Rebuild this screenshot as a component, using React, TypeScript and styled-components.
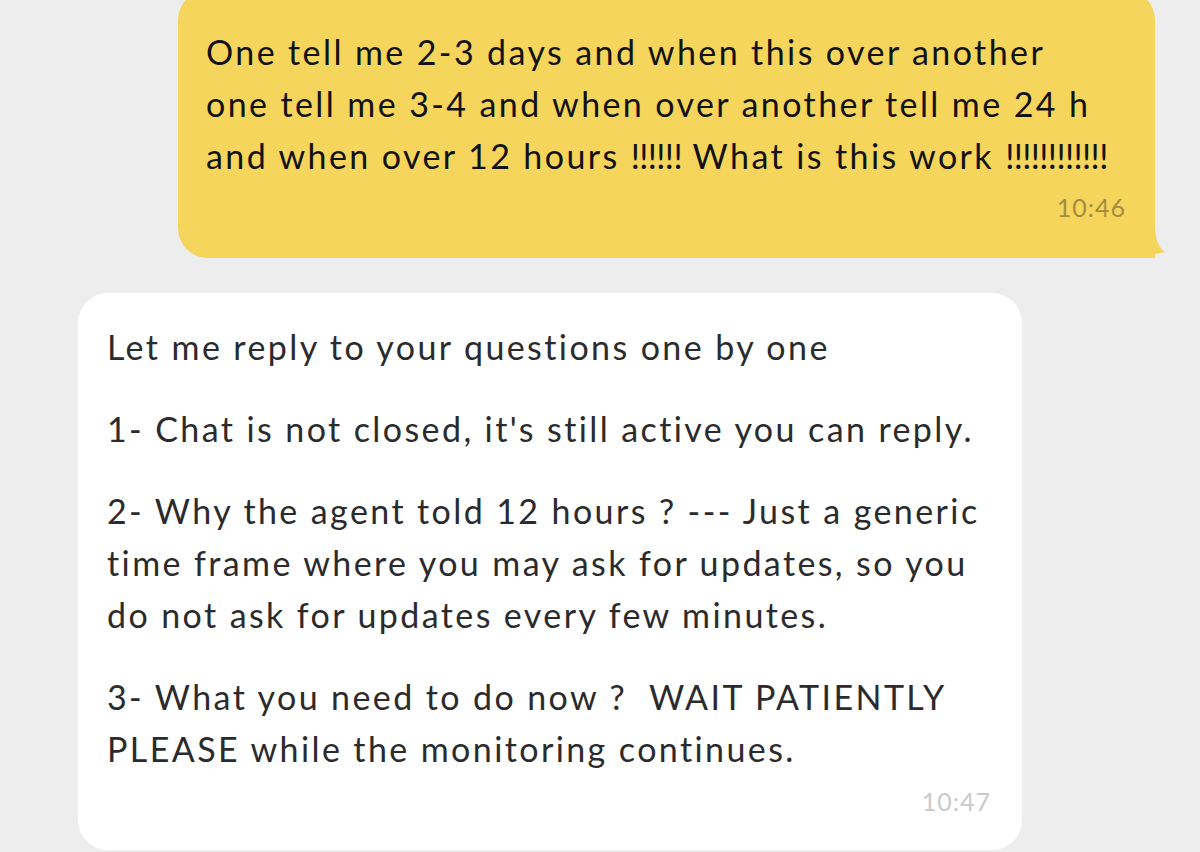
import React from "react";
import styled, { createGlobalStyle } from "styled-components";

const Global = createGlobalStyle`
  html, body { margin: 0; padding: 0; background: #ededed; }
  body { font-family: Lato, "Liberation Sans", sans-serif; }
`;

const Page = styled.div`
  width: 1200px;
  height: 852px;
  overflow: hidden;
  background: #ededed;
  display: flex;
  flex-direction: column;
`;

const OutBubble = styled.div`
  position: relative;
  margin-top: -10px;
  margin-left: 178px;
  width: 977px;
  box-sizing: border-box;
  background: #f5d55b;
  border-radius: 30px 30px 0 30px;
  padding: 36px 29px 36px 28px;
  color: #121212;
`;

const InBubble = styled.div`
  margin-top: 35px;
  margin-left: 78px;
  width: 944px;
  height: 557px;
  box-sizing: border-box;
  background: #ffffff;
  border-radius: 30px;
  padding: 28px 31px 0 29px;
  color: #2b2b2d;
  display: flex;
  flex-direction: column;
  gap: 30px;
`;

const Para = styled.p`
  margin: 0;
  font-size: 34px;
  line-height: 52px;
  letter-spacing: 2.4px;
  font-variant-ligatures: none;
  white-space: nowrap;
`;

const Bang = styled.span`
  letter-spacing: -0.6px;
`;

const Time = styled.div<{ $tone: "out" | "in" }>`
  text-align: right;
  font-size: 25px;
  line-height: 30px;
  letter-spacing: 1px;
  color: ${(p) => (p.$tone === "out" ? "#a48d3e" : "#c9c9cc")};
  margin-top: ${(p) => (p.$tone === "out" ? "10px" : "-19px")};
`;

const Tail = styled.svg`
  position: absolute;
  right: -12px;
  bottom: 0;
  width: 42px;
  height: 42px;
`;

export default function App() {
  return (
    <Page>
      <Global />
      <OutBubble>
        <Para>
          One tell me 2-3 days and when this over another
          <br />
          one tell me 3-4 and when over another tell me 24 h
          <br />
          and when over 12 hours <Bang>!!!!!!</Bang> What is this work{" "}
          <Bang>!!!!!!!!!!!!</Bang>
        </Para>
        <Time $tone="out">10:46</Time>
        <Tail viewBox="0 0 42 42">
          <path d="M0 0 H30 V12 Q31 30 40 36 L14 42 H0 Z" fill="#f5d55b" />
        </Tail>
      </OutBubble>
      <InBubble>
        <Para>Let me reply to your questions one by one</Para>
        <Para>1- Chat is not closed, it's still active you can reply.</Para>
        <Para>
          2- Why the agent told 12 hours ? --- Just a generic
          <br />
          time frame where you may ask for updates, so you
          <br />
          do not ask for updates every few minutes.
        </Para>
        <Para>
          3- What you need to do now ?&nbsp; WAIT PATIENTLY
          <br />
          PLEASE while the monitoring continues.
        </Para>
        <Time $tone="in">10:47</Time>
      </InBubble>
    </Page>
  );
}
